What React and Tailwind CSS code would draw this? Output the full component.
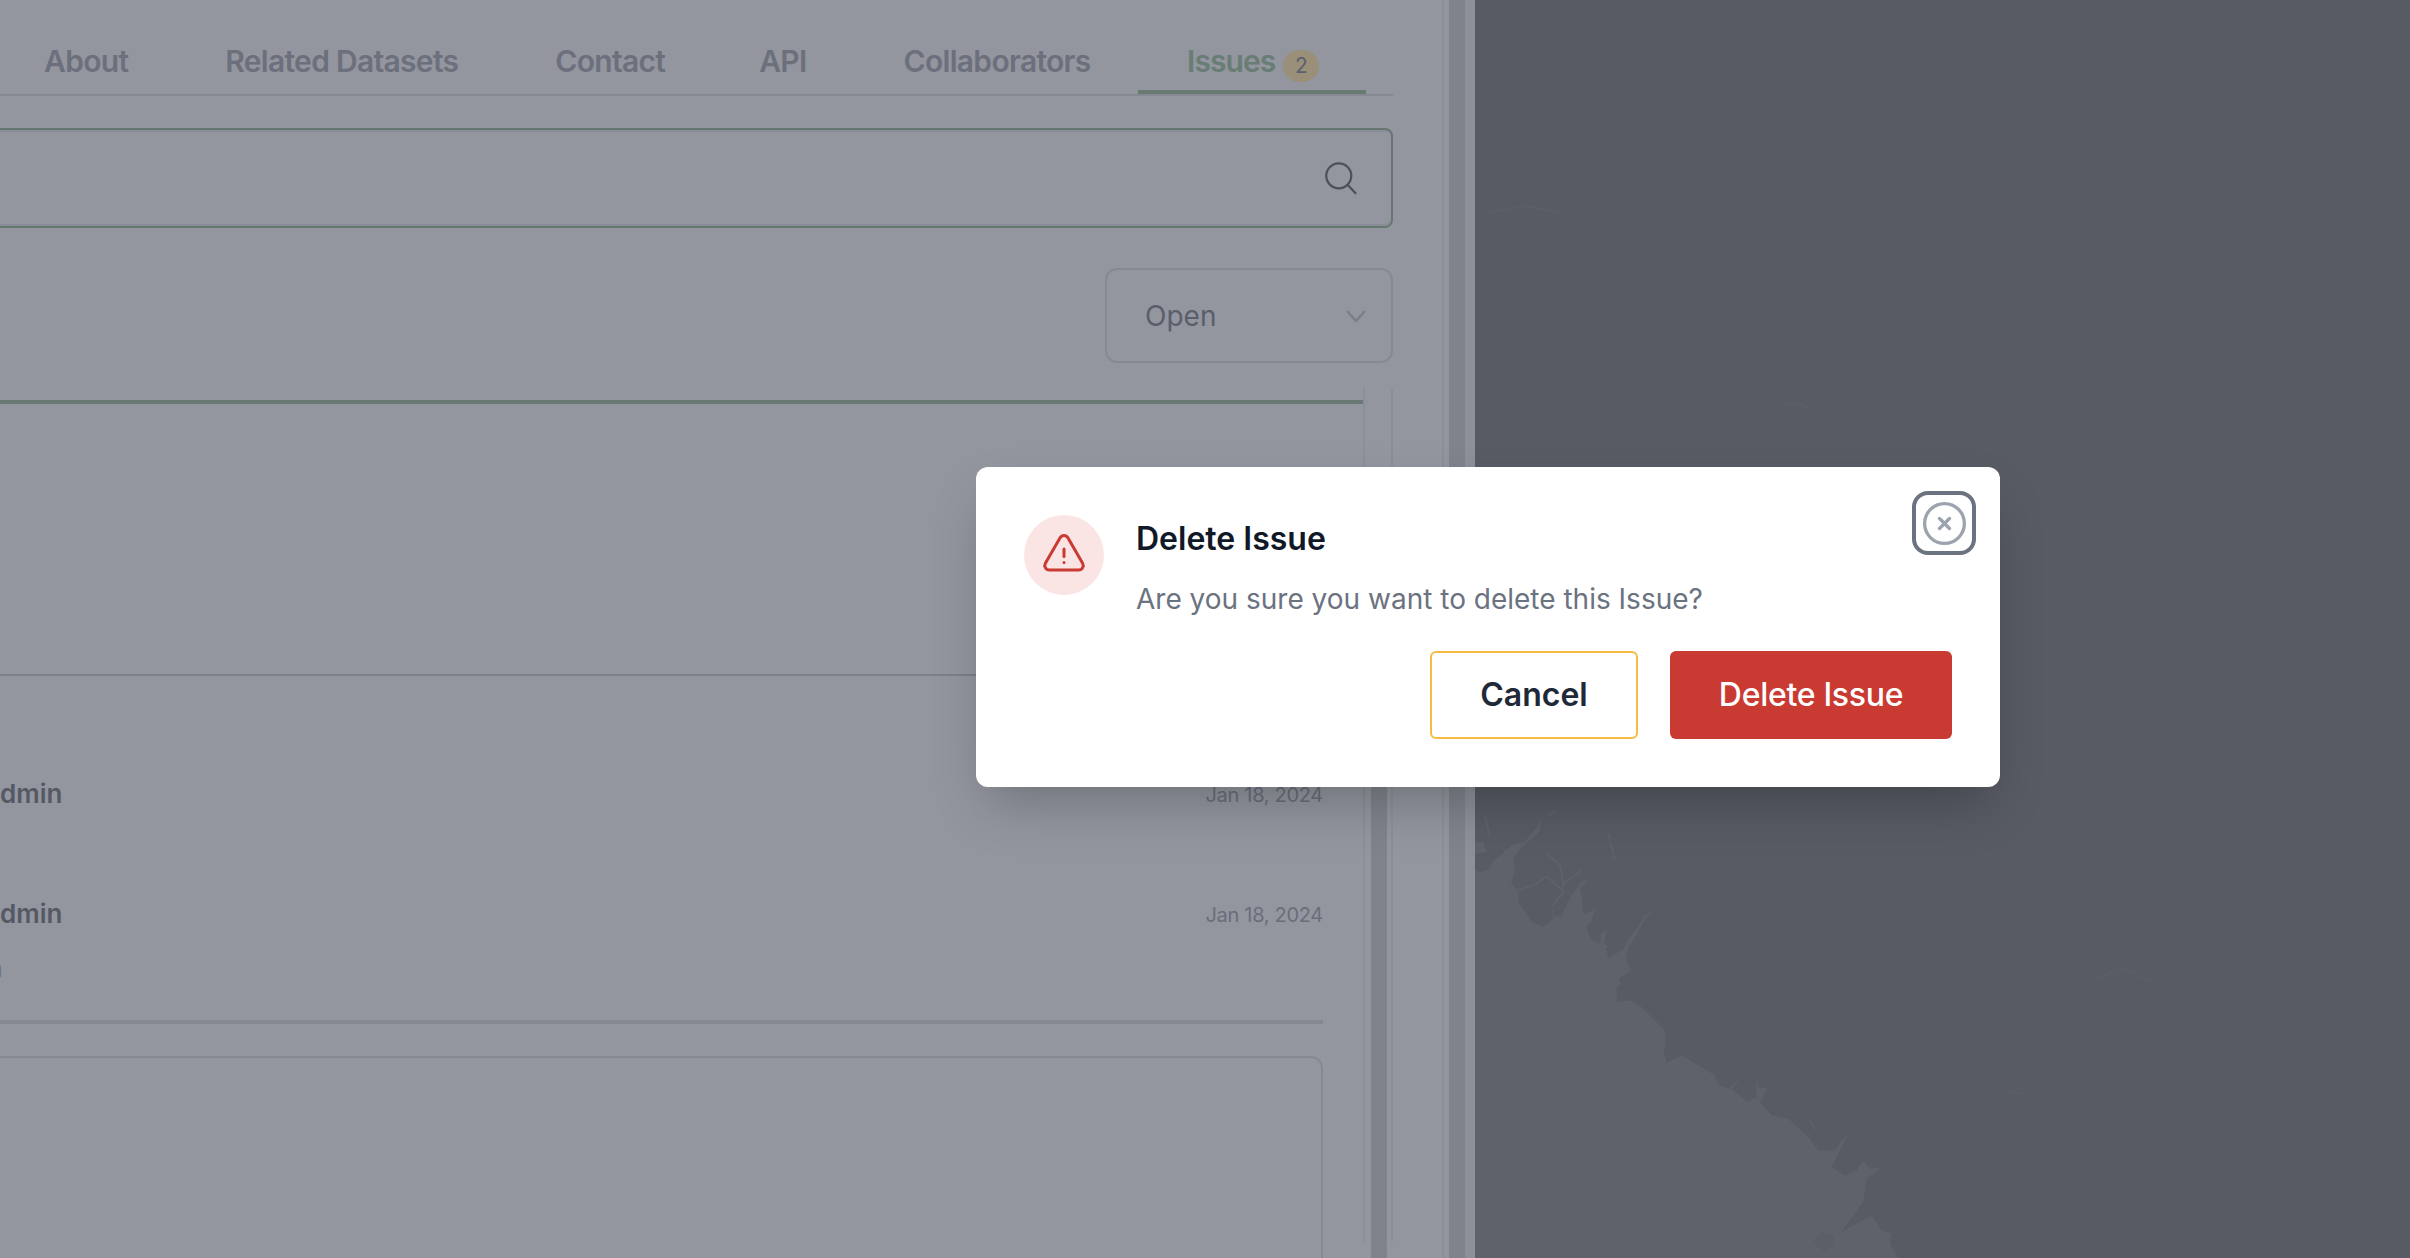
const tabs = ["About", "Related Datasets", "Contact", "API", "Collaborators"];

// sea, traced over the coast below the dialog (units are 1/3 px, see the g transform)
const sea =
  "M0 165 L25 165 L35 195 L0 200 Z M0 1413 L0 250 L15 255 L40 250 L52 226 L75 205 L110 175 L150 165 L185 122 L205 90 L190 138 L140 180 L115 215 L120 250 L108 290 L130 310 L130 345 L170 405 L205 420 L235 395 L228 355 L240 390 L262 385 L278 345 L290 325 L320 285 L340 275 L315 305 L322 340 L325 380 L355 370 L362 360 L350 400 L335 420 L345 455 L375 472 L378 440 L400 420 L430 392 L395 425 L388 470 L400 480 L392 485 L402 515 L445 485 L465 450 L490 420 L510 385 L535 368 L510 395 L480 450 L460 480 L452 520 L470 550 L432 575 L438 590 L422 605 L428 645 L465 640 L500 660 L570 730 L572 770 L565 795 L575 828 L620 805 L720 865 L720 875 L735 895 L760 905 L805 865 L770 905 L815 945 L845 930 L845 890 L895 830 L850 885 L850 905 L878 900 L855 945 L890 985 L940 995 L1000 1050 L1030 1090 L1080 1090 L1125 1030 L1090 1100 L1070 1140 L1110 1165 L1145 1150 L1165 1120 L1185 1145 L1220 1140 L1175 1175 L1165 1245 L1135 1285 L1100 1335 L1190 1285 L1220 1330 L1250 1340 L1245 1370 L1270 1413 Z";
const channels =
  "M130 310 L175 295 L215 268 L262 310 M215 200 L255 235 L265 290 L320 250 M265 290 L262 320 L232 355 M220 85 L240 75 M400 140 L420 220 M30 85 L45 150 M1000 995 L1022 1028";

function Tab({ label, className }) {
  return (
    <span className={`whitespace-nowrap text-[30px] leading-[36px] font-semibold tracking-[-0.7px] text-[#6c707c] ${className}`}>
      {label}
    </span>
  );
}

export default function App() {
  return (
    <div className="relative h-[1258px] w-[2410px] overflow-hidden bg-[#93969f] font-['Inter',sans-serif]">
      <div className="flex h-full">
        {/* Dataset panel behind the dialog */}
        <div className="flex h-full w-[1475px] shrink-0">
          <div className="w-[1393px] shrink-0">
            <div className="flex h-[96px] items-end justify-between border-b-2 border-[#858994] pl-[44px] pr-[27px]">
              <div className="flex h-[94px] items-start pt-[43px]">
                {tabs.map((t, i) => (
                  <Tab key={t} label={t} className={i === 0 ? "" : t === "API" ? "ml-[94px]" : "ml-[97px]"} />
                ))}
              </div>
              <div className="flex h-[94px] w-[228px] items-start border-b-4 border-[#687a72] pl-[49px] pt-[43px]">
                <span className="whitespace-nowrap text-[30px] leading-[36px] font-semibold tracking-[-0.9px] text-[#687d74]">Issues</span>
                <span className="ml-[8px] mt-[7px] flex h-[32px] w-[36px] shrink-0 items-center justify-center rounded-full bg-[#9a9079] text-[21px] text-[#5b6070]">
                  2
                </span>
              </div>
            </div>

            <div className="mt-[32px] flex h-[100px] items-center justify-end rounded-r-lg border-y-2 border-r-2 border-[#66776f] pr-[31px] shadow-[inset_0_2px_0_#8a8d97,inset_0_-2px_0_#8a8d97]">
              <svg className="h-[38px] w-[38px] text-[#4b505b]" viewBox="0 0 24 24" fill="none" stroke="currentColor" strokeWidth="1.4" strokeLinecap="round">
                <circle cx="10.6" cy="10.6" r="7.9" />
                <path d="M16.4 16.6 L21.2 21.6" />
              </svg>
            </div>

            <div className="mt-[40px] flex justify-end">
              <div className="flex h-[95px] w-[288px] items-center justify-between rounded-xl border-2 border-[#858994] pl-[38px] pr-[24px]">
                <span className="text-[28px] text-[#5a5e6b]">Open</span>
                <svg className="h-[14px] w-[22px] text-[#7a7e89]" viewBox="0 0 22 14" fill="none" stroke="currentColor" strokeWidth="2.4">
                  <path d="M2 2 L11 12 L20 2" />
                </svg>
              </div>
            </div>

            <div className="mt-[25px] flex h-[854px]">
              <div className="w-[1363px] shrink-0">
                <div className="mt-[12px] h-[4px] bg-[#687a72]" />
                <div className="h-[270px]" />
                <div className="h-[2px] bg-[#7c7f8c]" />
                <div className="w-[1323px]">
                  <div className="flex h-[238px] flex-col">
                    <div className="mt-[99px] flex h-[36px] items-center justify-between">
                      <span className="text-[26px] font-semibold text-[#555965]">dmin</span>
                      <span className="mt-[3px] text-[20px] tracking-[-0.3px] text-[#6a6e7a]">Jan 18, 2024</span>
                    </div>
                    <div className="mt-[84px] flex h-[36px] items-center justify-between">
                      <span className="text-[26px] font-semibold text-[#555965]">dmin</span>
                      <span className="mt-[3px] text-[20px] tracking-[-0.3px] text-[#6a6e7a]">Jan 18, 2024</span>
                    </div>
                    <div className="-ml-[12px] mt-[21px] text-[25px] leading-[32px] text-[#70747f]">n</div>
                  </div>
                  <div className="mt-[106px] h-[4px] bg-[#858994]" />
                  <div className="mt-[32px] h-[300px] rounded-tr-xl border-r-2 border-t-2 border-[#858994]" />
                </div>
              </div>
              <div className="h-full w-[30px] border-x-2 border-[#8c8f99] pl-[6px]">
                <div className="mt-[212px] h-full w-[16px] bg-[#80838c]" />
              </div>
            </div>
          </div>
          <div className="ml-[49px] h-full w-[2px] bg-[#8c8f99]" />
          <div className="ml-[5px] h-full w-[16px] bg-[#80838c]" />
          <div className="h-full w-[10px] bg-[#8d909a]" />
        </div>

        {/* Map */}
        <div className="h-full flex-1 bg-[#585b64]">
          <svg className="h-full w-full" viewBox="0 0 935 1258" fill="none">
            <g transform="translate(0 787) scale(0.3333)">
              <path d={sea} fill="#5f626b" />
              <path d={channels} stroke="#5f626b" strokeWidth="5" />
              <path d="M1015 1365 L1040 1335 L1075 1345 L1080 1375 L1050 1395 Z" fill="#585b64" opacity="0.5" />
            </g>
            <path d="M12 213 L50 206 L88 213 M270 384 L273 390 M306 407 L320 402 L336 410 M618 979 L650 968 L682 985 M530 1091 L548 1094" stroke="#5b5e67" strokeWidth="2" />
          </svg>
        </div>
      </div>

      {/* Delete dialog */}
      <div className="absolute left-[976px] top-[467px] h-[320px] w-[1024px] rounded-xl bg-white shadow-2xl">
        <button className="absolute right-[24px] top-[24px] flex h-[64px] w-[64px] items-center justify-center rounded-2xl border-4 border-[#6b7280] text-[#9ca3af]">
          <svg className="h-[53px] w-[53px] shrink-0" viewBox="0 0 24 24" fill="none" stroke="currentColor" strokeWidth="1.5" strokeLinecap="round" strokeLinejoin="round">
            <path d="m9.75 9.75 4.5 4.5m0-4.5-4.5 4.5M21 12a9 9 0 1 1-18 0 9 9 0 0 1 18 0Z" />
          </svg>
        </button>
        <div className="flex pl-[48px] pt-[48px]">
          <div className="flex h-[80px] w-[80px] shrink-0 items-center justify-center rounded-full bg-[#fae5e4] text-[#c93a32]">
            <svg className="h-[48px] w-[48px]" viewBox="0 0 24 24" fill="none" stroke="currentColor" strokeWidth="1.5" strokeLinecap="round" strokeLinejoin="round">
              <path d="M12 9v3.75m-9.303 3.376c-.866 1.5.217 3.374 1.948 3.374h14.71c1.73 0 2.813-1.874 1.948-3.374L13.949 3.378c-.866-1.5-3.032-1.5-3.898 0L2.697 16.126ZM12 15.75h.007v.008H12v-.008Z" />
            </svg>
          </div>
          <div className="ml-[32px]">
            <h3 className="mt-[1px] text-[32px] leading-[46px] font-semibold text-[#111827]">Delete Issue</h3>
            <p className="mt-[14px] text-[28px] leading-[46px] text-[#6b7280]">Are you sure you want to delete this Issue?</p>
          </div>
        </div>
        <div className="mt-[29px] flex justify-end gap-[32px] pr-[48px]">
          <button className="h-[88px] w-[208px] rounded-md border-2 border-[#f6bb43] text-[32px] font-semibold text-[#1f2937]">Cancel</button>
          <button className="h-[88px] w-[282px] rounded-md bg-[#c93a32] text-[32px] font-medium tracking-[-0.3px] text-white">Delete Issue</button>
        </div>
      </div>
    </div>
  );
}
